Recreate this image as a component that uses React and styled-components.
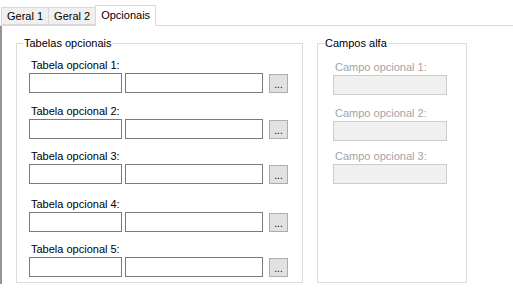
import React from "react";
import styled, { createGlobalStyle } from "styled-components";

const tabelas = [
  { label: "Tabela opcional 1:", gap: 8 },
  { label: "Tabela opcional 2:", gap: 11 },
  { label: "Tabela opcional 3:", gap: 10 },
  { label: "Tabela opcional 4:", gap: 13 },
  { label: "Tabela opcional 5:", gap: 10 },
];

const campos = [
  { label: "Campo opcional 1:", gap: 10 },
  { label: "Campo opcional 2:", gap: 11 },
  { label: "Campo opcional 3:", gap: 8 },
];

const App = () => {
  return (
    <>
      <GlobalStyle />
      <Window>
        <TabStrip>
          <Tab>Geral 1</Tab>
          <Tab>Geral 2</Tab>
          <Tab $active>Opcionais</Tab>
        </TabStrip>
        <Panel>
          <Group $width={287}>
            <Legend>Tabelas opcionais</Legend>
            {tabelas.map((t) => (
              <Row key={t.label} $gap={t.gap}>
                <Label>{t.label}</Label>
                <Fields>
                  <TextBox $width={93} />
                  <TextBox $width={138} />
                  <BrowseButton>...</BrowseButton>
                </Fields>
              </Row>
            ))}
          </Group>
          <Group $width={150}>
            <Legend>Campos alfa</Legend>
            {campos.map((c) => (
              <Row key={c.label} $gap={c.gap} $indent={15}>
                <Label $disabled>{c.label}</Label>
                <TextBox $width={114} disabled />
              </Row>
            ))}
          </Group>
        </Panel>
      </Window>
    </>
  );
};

export default App;

const GlobalStyle = createGlobalStyle`
  body {
    margin: 0;
    background: #ffffff;
    font-family: "Liberation Sans", Arial, sans-serif;
    font-size: 11px;
    color: #000000;
  }
`;

const Window = styled.div`
  width: 513px;
  height: 289px;
  background: #ffffff;
  overflow: hidden;
`;

const TabStrip = styled.div`
  display: flex;
  align-items: flex-end;
  height: 25px;
  padding-left: 1px;
  border-bottom: 1px solid #d9d9d9;
`;

const Tab = styled.div`
  box-sizing: border-box;
  height: ${(p) => (p.$active ? "21px" : "18px")};
  margin-bottom: ${(p) => (p.$active ? "-1px" : "0")};
  padding: ${(p) => (p.$active ? "2px 5px 0" : "1px 5px 0")};
  margin-left: -1px;
  line-height: 15px;
  background: ${(p) => (p.$active ? "#ffffff" : "#f0f0f0")};
  border: 1px solid #d9d9d9;
  border-bottom: ${(p) => (p.$active ? "none" : "1px solid #d9d9d9")};
  position: relative;
  z-index: ${(p) => (p.$active ? 1 : 0)};
  &:first-child {
    margin-left: 0;
  }
`;

const Panel = styled.div`
  display: flex;
  gap: 14px;
  height: 258px;
  box-sizing: border-box;
  padding: 10px 0 0 14px;
  border-left: 2px solid #969696;
`;

const Group = styled.fieldset`
  box-sizing: border-box;
  width: ${(p) => p.$width}px;
  height: 247px;
  margin: 0;
  padding: 0 0 0 12px;
  border: 1px solid #dcdcdc;
  display: flex;
  flex-direction: column;
  align-items: flex-start;
`;

const Legend = styled.legend`
  margin-left: -6px;
  padding: 0 1px;
  line-height: 14px;
`;

const Row = styled.div`
  display: flex;
  flex-direction: column;
  margin-top: ${(p) => p.$gap}px;
  margin-left: ${(p) => (p.$indent ? p.$indent - 12 : 0)}px;
`;

const Label = styled.div`
  margin-left: 2px;
  line-height: 14px;
  height: 15px;
  color: ${(p) => (p.$disabled ? "#a3a3a3" : "#000000")};
`;

const Fields = styled.div`
  display: flex;
  align-items: flex-start;
  gap: 3px;
`;

const TextBox = styled.input`
  box-sizing: border-box;
  width: ${(p) => p.$width}px;
  height: 20px;
  margin: 0;
  padding: 0 2px;
  border: 1px solid #7a7a7a;
  background: #ffffff;
  font: inherit;
  outline: none;
  &:disabled {
    border-color: #cccccc;
    background: #f0f0f0;
  }
`;

const BrowseButton = styled.button`
  box-sizing: border-box;
  width: 19px;
  height: 19px;
  margin: 1px 0 0 3px;
  padding: 0 0 2px;
  border: 1px solid #adadad;
  background: #e1e1e1;
  font-family: "Liberation Sans", Arial, sans-serif;
  font-size: 10px;
  line-height: 10px;
  color: #000000;
  display: flex;
  align-items: flex-end;
  justify-content: center;
`;
